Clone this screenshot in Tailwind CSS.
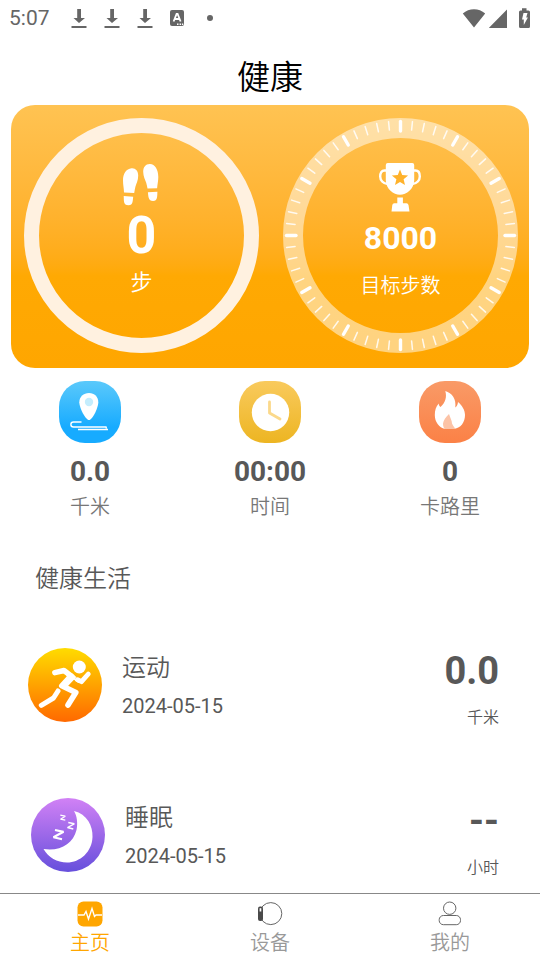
<!DOCTYPE html>
<html lang="zh-CN">
<head>
<meta charset="utf-8">
<meta name="viewport" content="width=device-width, initial-scale=1">
<title>健康</title>
<script src="https://cdn.jsdelivr.net/npm/@tailwindcss/browser@4"></script>
</head>
<body class="flex min-h-screen flex-col bg-white font-[Roboto,'Noto_Sans_CJK_SC',sans-serif] text-[#585858]">

<!-- Status bar -->
<div class="flex h-9 items-center justify-between pr-2 pl-[9px] text-[#666]">
  <div class="flex items-center">
    <span class="w-[61px] text-[21px] leading-6">5:07</span>
    <svg class="mr-[15px] h-[22px] w-[18px]" viewBox="0 0 18 22" fill="currentColor"><path d="M7.200 2h3.800v9h4L9 16 3.500 11h3.700zM1.500 19h15v2h-15z"/></svg>
    <svg class="mr-[15px] h-[22px] w-[18px]" viewBox="0 0 18 22" fill="currentColor"><path d="M7.200 2h3.800v9h4L9 16 3.500 11h3.700zM1.500 19h15v2h-15z"/></svg>
    <svg class="mr-[15px] h-[22px] w-[18px]" viewBox="0 0 18 22" fill="currentColor"><path d="M7.200 2h3.800v9h4L9 16 3.500 11h3.700zM1.500 19h15v2h-15z"/></svg>
    <svg class="mr-[22px] h-4 w-4" viewBox="0 0 16 16"><rect x="1" width="14" height="16" rx="2" fill="currentColor"/><path d="M4.600 11.500 7.600 4h1l3 7.500M5.800 9h4.600" fill="none" stroke="#fff" stroke-width="1.800"/><path d="M8 13.500h1.500v1.500H8zM10.600 13.500h1.500v1.500h-1.500zM13 13.500h1.200v1.500H13z" fill="#fff"/></svg>
    <span class="h-[6px] w-[6px] rounded-full bg-[#666]"></span>
  </div>
  <svg class="h-[22px] w-[70px]" viewBox="462 6 70 22" fill="currentColor"><path d="M462.800 12.500C469 6.800 479 6.800 485.200 12.500L474 26.500zM507 8.500V27H488.800zM519 11q0-1.500 1.500-1.500h1.500V7.200h4.500v2.300h2q1.500 0 1.500 1.500v14.500q0 1.500-1.500 1.500h-8q-1.500 0-1.500-1.500z"/><path d="M523.500 12h4l-1.300 4.500h1.700L523.800 24v-5.500h-1.800z" fill="#fff"/></svg>
</div>

<header class="pt-[18px] pb-[3px] text-center">
  <h1 class="text-[33px] leading-12 font-[350] text-black">健康</h1>
</header>

<main class="flex flex-col">
  <section class="mx-[11px] flex justify-between rounded-3xl bg-linear-to-b from-[#ffc352] via-[#ffa903] via-65% to-[#ffa600] pt-[13px] pr-[11px] pb-[15px] pl-[13px] text-white">
    <div class="flex size-[235px] flex-col items-center rounded-full border-[15px] border-[#fff1e0] pt-[30px]">
      <svg class="h-[44px] w-[38px]" viewBox="0 0 38 44" fill="#fff"><path d="M8.500 5.200C12.500 4.800 15.200 7.800 15.200 12.500c0 5-1.800 8-2.800 11.200-.6 2-.8 4.300-1.200 6.200L1 29.400C.9 25 0 22 0 17.500 0 10.500 3.200 5.700 8.500 5.200zM.7 33l9.500.7c-.5 3 .1 8.600-4.700 8.600C0 42.300 1 37 .7 33z"/><path d="M27 1c-4.200-.2-6.800 3-6.800 7.800 0 4.800 2 8 3 11 .7 2 .9 4 1.300 5.800l9.600-.4c.4-4.200 1.200-7.200 1.200-11.200C35.300 6.500 32 1.300 27 1zM24.900 29.200l9.500-.5c-.2 4.200.3 9.300-4.300 9.300-5 0-4.700-5-5.200-8.800z"/></svg>
      <strong class="text-[52px] leading-[58px] font-bold">0</strong>
      <span class="mt-[2px] text-[22px] leading-8 font-[350]">步</span>
    </div>
    <div class="relative flex size-[235px] flex-col items-center rounded-full border-[20px] border-white/50 pt-6">
      <svg class="absolute -inset-5 size-[235px]" viewBox="-117.500 -117.500 235 235" fill="none" stroke="#fff" stroke-linecap="round">
        <defs>
          <g id="tick"><path d="M0-114.500V-106" stroke-width="1.500" stroke-opacity=".85"/></g>
          <g id="ticks"><path d="M0-114V-104.500" stroke-width="3.400"/><use href="#tick" transform="rotate(6)"/><use href="#tick" transform="rotate(12)"/><use href="#tick" transform="rotate(18)"/><use href="#tick" transform="rotate(24)"/></g>
          <g id="quarter"><use href="#ticks"/><use href="#ticks" transform="rotate(30)"/><use href="#ticks" transform="rotate(60)"/></g>
        </defs>
        <use href="#quarter"/><use href="#quarter" transform="rotate(90)"/><use href="#quarter" transform="rotate(180)"/><use href="#quarter" transform="rotate(270)"/>
      </svg>
      <svg class="h-[50px] w-11" viewBox="0 0 44 50"><path d="M7.500 8.500H5.500C2.500 8.500 1.200 11 1.200 14.500s2.800 7.500 7.600 7.500M34.500 8.500h2c3 0 4.300 2.500 4.300 6s-2.800 7.500-7.600 7.500" fill="none" stroke="#fff" stroke-width="2.400"/><path d="M6.800 3Q6.800 1 8.800 1h24.400q2 0 2 2v15.500C35 27 27.500 32.800 21 32.800S7 27 6.800 18.500zM18.300 35.500h5.600v5.800h3.600q1.600 0 2 1.700l1 6.500h-18l.8-6.500q.3-1.700 2-1.700h3z" fill="#fff"/><path d="m21 7.500 2.200 5.500 5.900.4-4.500 3.900 1.400 5.800-5-3.200-5 3.200 1.400-5.800-4.500-3.900 5.900-.4z" fill="#ffb22b"/></svg>
      <strong class="mt-[6px] text-[32px] leading-10 font-bold">8000</strong>
      <span class="mt-3 text-[20px] leading-8 font-[350]">目标步数</span>
    </div>
  </section>

  <section class="grid grid-cols-3 pt-[13px] text-center">
    <div class="flex flex-col items-center">
      <svg class="size-[62px]" viewBox="0 0 62 62"><defs><linearGradient id="blue" x2="0" y2="1"><stop stop-color="#5bc9fb"/><stop offset=".75" stop-color="#17abff"/></linearGradient></defs><rect width="62" height="62" rx="26" fill="url(#blue)"/><path d="M30 12c5.500 0 9.300 3.800 9.300 9.200C39.300 26.500 33.500 39 30 39s-9.700-12.500-9.700-17.800C20.300 15.800 24.500 12 30 12z" fill="#fff"/><circle cx="30" cy="21" r="4.200" fill="#c4edfd"/><path d="M22.500 41h-8c-3.500 0-3.500 5 0 5H47l.5 1.500M19 48.500h30" fill="none" stroke="#fff" stroke-width="1.400"/></svg>
      <strong class="mt-[13px] text-[28px] leading-8 font-bold">0.0</strong>
      <span class="mt-[5px] text-[20px] leading-7 font-[350] text-[#777]">千米</span>
    </div>
    <div class="flex flex-col items-center">
      <svg class="size-[62px]" viewBox="0 0 62 62"><defs><linearGradient id="gold" x2="0" y2="1"><stop stop-color="#f9ca5d"/><stop offset="1" stop-color="#edb522"/></linearGradient></defs><rect width="62" height="62" rx="26" fill="url(#gold)"/><circle cx="31.500" cy="31.500" r="18.700" fill="#fff"/><path d="M30.500 21v11l10.500 6" fill="none" stroke="#fbd98b" stroke-width="2.800" stroke-linecap="round" stroke-linejoin="round"/></svg>
      <strong class="mt-[13px] text-[28px] leading-8 font-bold">00:00</strong>
      <span class="mt-[5px] text-[20px] leading-7 font-[350] text-[#777]">时间</span>
    </div>
    <div class="flex flex-col items-center">
      <svg class="size-[62px]" viewBox="0 0 62 62"><defs><linearGradient id="coral" x2="0" y2="1"><stop stop-color="#f99a67"/><stop offset="1" stop-color="#fb8146"/></linearGradient></defs><rect width="62" height="62" rx="26" fill="url(#coral)"/><path d="M26.300 10C33 12 37.500 18 36.300 26.500c1.600-1.200 2.500-3 2.700-5.500 4 3.500 7 8 7 13 0 7-4 13.500-12 14h-8c-6-1.500-10.200-7-10.200-14 0-4.500 1-8.500 4-11.500 0 1.500.5 2.500 1.700 3.500C26.500 21.500 28 16 26.300 10z" fill="#fff"/><path d="M30 33c-3 3-5.500 6-6 9.500 0 2 .5 4 1.500 5.500h11c-1.500-2-2.500-3.500-3.500-5.500 0-3-2-6-3-9.500z" fill="#fcc3a6"/></svg>
      <strong class="mt-[13px] text-[28px] leading-8 font-bold">0</strong>
      <span class="mt-[5px] text-[20px] leading-7 font-[350] text-[#777]">卡路里</span>
    </div>
  </section>

  <h2 class="mt-[42px] pl-[35px] text-[24px] leading-8 font-[350]">健康生活</h2>

  <ul class="mt-[53px] flex flex-col gap-[68px]">
    <li class="flex items-start pr-[41px] pl-7">
      <svg class="size-[74px]" viewBox="0 0 74 74"><defs><linearGradient id="sun" x2="0" y2="1"><stop stop-color="#ffdc00"/><stop offset="1" stop-color="#ff6900"/></linearGradient></defs><circle cx="37" cy="37" r="37" fill="url(#sun)"/><circle cx="51.300" cy="19" r="6.500" fill="#fff"/><g fill="none" stroke="#fff" stroke-linejoin="round" stroke-linecap="round"><path d="M26.800 24.700 36 22.500l8 6.200" stroke-width="5.400"/><path d="M60.300 26 53.500 33.700 49.500 31.700" stroke-width="4.800"/><path d="M46 30.500 50.500 34" stroke-width="2"/><path d="M30 43 25.500 50 13.300 57.300" stroke-width="5"/><path d="M43 28 33.800 37.800l14 6.700-7.800 12.500" stroke-width="5.600"/></g><path d="m36 20.500 12.500 8.500L40 38l-5 2.500-3-3 7-8.500z" fill="#fff"/></svg>
      <div class="ml-5 flex-1 pt-1">
        <h3 class="text-[24px] leading-8 font-[350]">运动</h3>
        <time class="mt-[10px] block text-[20px] leading-6" datetime="2024-05-15">2024-05-15</time>
      </div>
      <div class="flex flex-col items-end pt-[3px]">
        <strong class="text-[38px] leading-10 font-bold">0.0</strong>
        <span class="mt-[15px] text-[16px] leading-6 font-[350]">千米</span>
      </div>
    </li>
    <li class="flex items-start pr-[41px] pl-[31px]">
      <svg class="size-[74px]" viewBox="0 0 74 74"><defs><linearGradient id="night" x2="0" y2="1"><stop stop-color="#d181f5"/><stop offset="1" stop-color="#664fdc"/></linearGradient></defs><circle cx="37" cy="37" r="37" fill="url(#night)"/><path d="M43 13C56 16 62 28 61.500 39 61 54 49 64.500 36 64.500 26 64.500 17.500 59.500 12.500 51 29 53.500 42 46 45.500 32 47 25 46 18 43 13z" fill="#fff"/><g fill="none" stroke="#fff" stroke-linejoin="bevel"><path d="M24 32 32.500 33.800 22.500 39.300 31 41.300" stroke-width="2.200"/><path d="M37.300 24.500 43.300 25.800 36.500 29.500 42.300 31" stroke-width="1.400"/><path d="M29.300 17.200 34.300 18.200 29.500 21.200 34.300 22.200" stroke-width="1.200"/></g></svg>
      <div class="ml-5 flex-1 pt-1">
        <h3 class="text-[24px] leading-8 font-[350]">睡眠</h3>
        <time class="mt-[10px] block text-[20px] leading-6" datetime="2024-05-15">2024-05-15</time>
      </div>
      <div class="flex flex-col items-end pt-[3px]">
        <strong class="text-[38px] leading-10 font-bold">--</strong>
        <span class="mt-[15px] text-[16px] leading-6 font-[350]">小时</span>
      </div>
    </li>
  </ul>
</main>

<nav class="mt-auto grid h-[67px] grid-cols-3 border-t border-[#888] pt-[7px] text-[20px] leading-7 font-[350] text-[#999]">
  <a href="#home" class="flex flex-col items-center text-[#ffa600]" aria-current="page">
    <svg class="h-[26px] w-[26px]" viewBox="0 0 26 26"><rect x=".5" y=".5" width="25" height="25" rx="6" fill="#ffa600"/><path d="M1 14h6l2-3.500 2.500 7.500 3.500-10.500 2.500 8 1.500-1.500h6" fill="none" stroke="#fff" stroke-width="1.400"/></svg>
    <span class="mt-[2px]">主页</span>
  </a>
  <a href="#device" class="flex flex-col items-center">
    <svg class="h-[26px] w-[26px]" viewBox="0 0 26 26"><circle cx="13.800" cy="12.600" r="11" fill="none" stroke="#666" stroke-width="1"/><rect x="1" y="5.500" width="5" height="14.500" rx="2" fill="#4a4a4a"/><rect x="2.600" y="7.200" width="1.700" height="3.300" fill="#fff"/></svg>
    <span class="mt-[2px]">设备</span>
  </a>
  <a href="#me" class="flex flex-col items-center">
    <svg class="h-[26px] w-[26px]" viewBox="0 0 26 26" fill="none" stroke="#666"><circle cx="12.700" cy="7.200" r="6.200"/><rect x="2.200" y="14.500" width="21.300" height="9.200" rx="4.200"/></svg>
    <span class="mt-[2px]">我的</span>
  </a>
</nav>
</body>
</html>
